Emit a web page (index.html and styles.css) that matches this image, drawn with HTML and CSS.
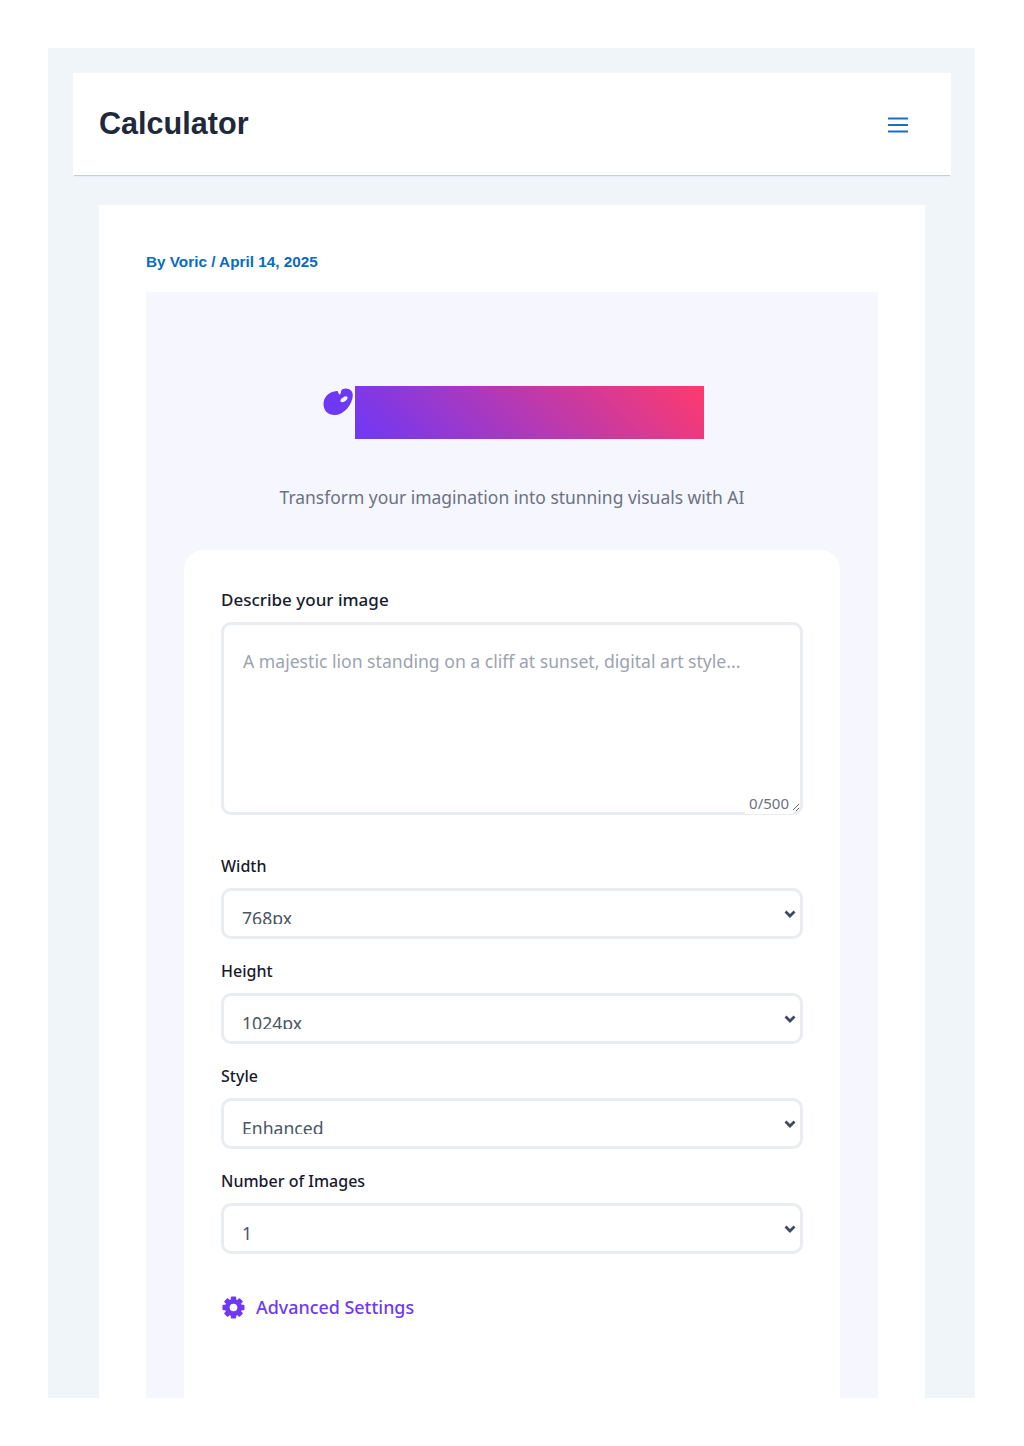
FILE: index.html
```html
<!DOCTYPE html>
<html lang="en">
<head>
	<meta charset="UTF-8">
	<meta name="viewport" content="width=device-width, initial-scale=1.0">
	<title>Calculator</title>
	<link rel="stylesheet" href="styles.css">
</head>
<body>
	<div class="page">
		<header class="site-header">
			<div class="site-title">Calculator</div>
			<button class="menu-btn" aria-label="Menu">
				<svg width="22" height="16" viewBox="0 0 22 16"><path d="M1 1.500h20M1 8h20M1 14.500h20" fill="none" stroke="#1a6ec7" stroke-width="2"/></svg>
			</button>
		</header>
		<main class="article">
			<div class="meta">By Voric / April 14, 2025</div>
			<section class="generator">
				<div class="logo">
					<svg class="logo-icon" width="30" height="28" viewBox="0 0 30 28">
						<path fill-rule="evenodd" fill="#6e38f7" d="M19 1.500C17.500 3 18.500 6 16.500 6.500C15 5.500 15.500 3 14 3C6 3.500 0.500 9 0.500 16C0.500 23 5.500 27.500 12.500 27C21 26.500 29.500 17 29.800 7C30 2 24 -1.500 19 1.500ZM20 9.500C22 8 24 8 24.500 9.300C25 10.500 23.500 12.500 21.500 13.500C19.500 14.500 18 14.300 17.500 13.200C17 12 18.300 10.700 20 9.500Z"/>
					</svg>
					<div class="logo-bar"></div>
				</div>
				<p class="tagline">Transform your imagination into stunning visuals with AI</p>
				<form class="card">
					<div class="field field-prompt">
						<label for="prompt">Describe your image</label>
						<div class="prompt-wrap">
							<textarea id="prompt" placeholder="A majestic lion standing on a cliff at sunset, digital art style..."></textarea>
							<span class="counter">0/500</span>
						</div>
					</div>
					<div class="field">
						<label for="width">Width</label>
						<div class="select-wrap">
							<select id="width"><option>768px</option></select>
							<svg class="chevron" width="12" height="8" viewBox="0 0 12 8"><path d="M1.500 1.500L6 6l4.500-4.500" fill="none" stroke="#3f4a5f" stroke-width="2.800"/></svg>
						</div>
					</div>
					<div class="field">
						<label for="height">Height</label>
						<div class="select-wrap">
							<select id="height"><option>1024px</option></select>
							<svg class="chevron" width="12" height="8" viewBox="0 0 12 8"><path d="M1.500 1.500L6 6l4.500-4.500" fill="none" stroke="#3f4a5f" stroke-width="2.800"/></svg>
						</div>
					</div>
					<div class="field">
						<label for="style">Style</label>
						<div class="select-wrap">
							<select id="style"><option>Enhanced</option></select>
							<svg class="chevron" width="12" height="8" viewBox="0 0 12 8"><path d="M1.500 1.500L6 6l4.500-4.500" fill="none" stroke="#3f4a5f" stroke-width="2.800"/></svg>
						</div>
					</div>
					<div class="field">
						<label for="count">Number of Images</label>
						<div class="select-wrap">
							<select id="count" class="select-full"><option>1</option></select>
							<svg class="chevron" width="12" height="8" viewBox="0 0 12 8"><path d="M1.500 1.500L6 6l4.500-4.500" fill="none" stroke="#3f4a5f" stroke-width="2.800"/></svg>
						</div>
					</div>
					<div class="advanced">
						<svg width="23" height="23" viewBox="0 0 24 24">
							<g fill="#6e38f7">
								<rect x="9.200" y="0.500" width="5.600" height="23" rx="1"/>
								<rect x="9.200" y="0.500" width="5.600" height="23" rx="1" transform="rotate(45 12 12)"/>
								<rect x="9.200" y="0.500" width="5.600" height="23" rx="1" transform="rotate(90 12 12)"/>
								<rect x="9.200" y="0.500" width="5.600" height="23" rx="1" transform="rotate(135 12 12)"/>
							</g>
							<circle cx="12" cy="12" r="6.500" fill="none" stroke="#6e38f7" stroke-width="5"/>
							<circle cx="12" cy="12" r="4" fill="#fff"/>
						</svg>
						<span>Advanced Settings</span>
					</div>
				</form>
			</section>
		</main>
	</div>
</body>
</html>
```
FILE: styles.css
```css
body {
	margin: 0;
	background: #fff;
	font-family: "Noto Sans", sans-serif;
}
.page {
	box-sizing: border-box;
	width: 927px;
	height: 1350px;
	margin: 48px 0 48px 48px;
	padding: 25px 24px 0 25px;
	background: #f0f5fa;
	overflow: hidden;
}
.site-header {
	display: flex;
	align-items: center;
	justify-content: space-between;
	height: 102px;
	padding: 0 42px 0 26px;
	background: #fff;
	box-shadow: 0 2px 1px -1px #c4ccd6;
}
.site-title {
	padding-bottom: 2px;
	font-family: "Liberation Sans", sans-serif;
	font-size: 30.600px;
	font-weight: bold;
	color: #1e293b;
}
.menu-btn {
	display: flex;
	margin-top: 2px;
	padding: 0;
	border: 0;
	background: none;
}
.article {
	margin: 30px 26px 0;
	padding: 47px 47px 0;
	background: #fff;
}
.meta {
	font-family: "Liberation Sans", sans-serif;
	font-size: 15.300px;
	font-weight: bold;
	line-height: 19px;
	color: #0a6bc2;
}
.generator {
	margin-top: 21px;
	padding: 94px 38px 0;
	background: #f6f6fe;
}
.logo {
	display: flex;
	justify-content: center;
	align-items: flex-start;
	gap: 2px;
	height: 53px;
	padding-left: 2px;
}
.logo-icon {
	margin-top: 2px;
}
.logo-bar {
	width: 349px;
	height: 53px;
	background: linear-gradient(45deg, #6e38f7, #ff3a6e);
}
.tagline {
	margin: 45px 0 40px;
	text-align: center;
	font-size: 17.450px;
	line-height: 26px;
	color: #6b7280;
}
.card {
	padding: 37px 37px 80px;
	background: #fff;
	border-radius: 20px 20px 0 0;
}
.field {
	margin-bottom: 20px;
}
.field-prompt {
	margin-bottom: 39px;
}
.field label {
	display: block;
	margin-bottom: 9px;
	font-size: 16px;
	font-weight: 500;
	line-height: 25px;
	color: #1a1a2e;
}
.field-prompt label {
	margin-bottom: 10px;
	font-size: 17px;
}
.prompt-wrap {
	position: relative;
}
.prompt-wrap textarea {
	display: block;
	box-sizing: border-box;
	width: 100%;
	height: 193px;
	padding: 23px 19px;
	border: 3px solid #e9ecf0;
	border-radius: 10px;
	outline: none;
	font-family: inherit;
	font-size: 17.600px;
	line-height: 26px;
	color: #4b5563;
}
.prompt-wrap textarea::placeholder {
	color: #9ca3af;
}
.counter {
	position: absolute;
	right: 10px;
	bottom: 1px;
	padding: 0 4px;
	background: #fff;
	font-size: 15px;
	line-height: 22px;
	color: #6b7280;
}
.select-wrap {
	position: relative;
}
.select-wrap select {
	display: block;
	box-sizing: border-box;
	width: 100%;
	height: 51px;
	padding: 15px 18px 12px;
	border: 3px solid #e9ecf0;
	border-radius: 10px;
	outline: none;
	appearance: none;
	background: #fff;
	font-family: inherit;
	font-size: 17.600px;
	color: #4b5563;
}
.select-wrap .select-full {
	padding-bottom: 6px;
}
.chevron {
	position: absolute;
	top: 22px;
	right: 7px;
}
.advanced {
	display: flex;
	align-items: center;
	gap: 11px;
	margin-top: 41px;
	padding-left: 1px;
	font-size: 17.900px;
	font-weight: 500;
	color: #6e38f7;
}
```
